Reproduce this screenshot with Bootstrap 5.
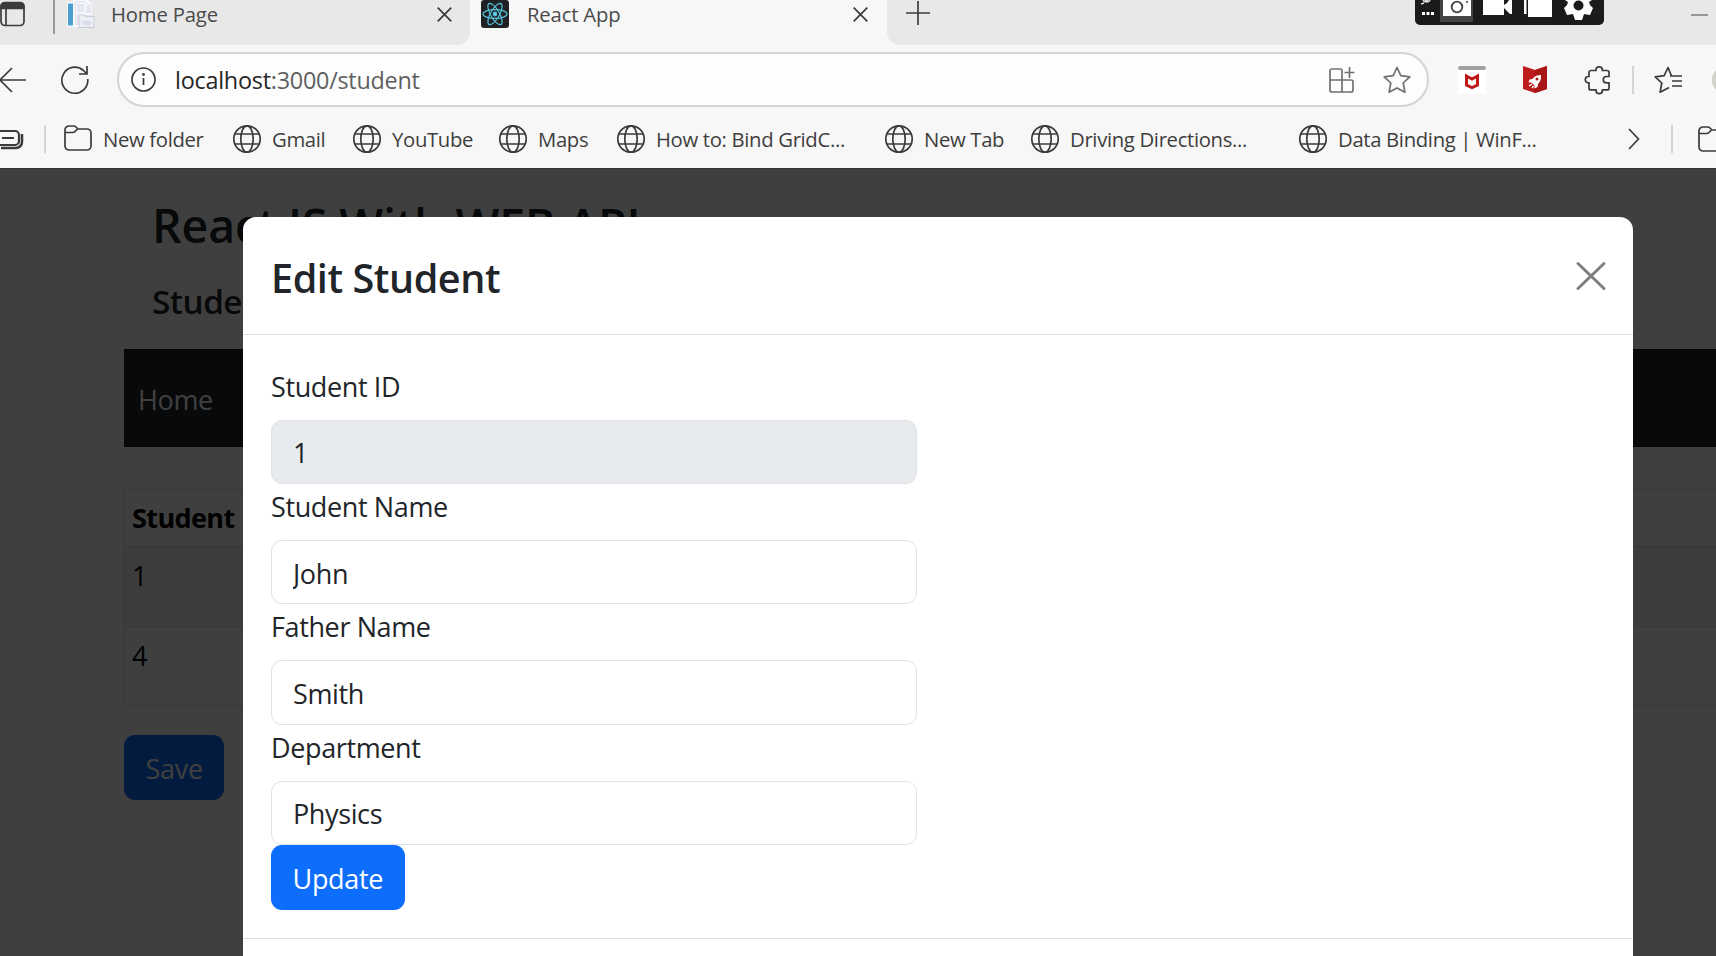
<!DOCTYPE html>
<html lang="en">
<head>
<meta charset="utf-8">
<meta name="viewport" content="width=device-width, initial-scale=1">
<title>React App</title>
<link href="https://cdn.jsdelivr.net/npm/bootstrap@5.3.0/dist/css/bootstrap.min.css" rel="stylesheet">
<style>
body{width:1716px;height:956px;overflow:hidden;background:#f7f7f7;font-family:"Open Sans","Noto Sans",sans-serif;font-size:27px;letter-spacing:-.38px;color:#212529}
svg{display:block;flex:none;fill:none;stroke:#3b3b3b;stroke-width:1.7;overflow:visible}
svg.flat{stroke:none}
/* tab strip */
.strip{height:45px}
.tabbox{height:45px;background:#e8e8e8;flex:none}
.tabbox>*{flex:none}
.tab-left{width:470px;border-bottom-right-radius:13px}
.tab-on{width:417px;background:#f7f7f7}
.tab-rest{border-bottom-left-radius:13px}
.tabtext{font-size:20.3px;line-height:28px;color:#4a4a4a;letter-spacing:-.17px;white-space:nowrap}
.tab-left .tabtext{width:326px;margin-left:16px}
.tab-on .tabtext{width:326px;margin-left:18px}
.tab-close{margin-top:7px}
.stripline{width:2px;height:34px;background:#999;margin:0 12px 0 28px}
.recorder{width:189px;height:25px;margin-left:497px}
/* toolbar */
.tools{height:69px}
.pill{width:1312px;height:55px;margin-left:27px;border:2px solid #d4d4d4;border-radius:28px;background:#fdfdfd;flex:none}
.url{font-size:23.4px;letter-spacing:-.25px;color:#5f5f5f;padding-top:2px}
.url b{font-weight:400;color:#272727}
.thinline{width:2px;height:28px;background:#d4d4d4;flex:none}
.grey-ico{stroke:#707070}
/* bookmarks */
.marks{height:54px;padding-bottom:4px;font-size:20.3px;letter-spacing:-.33px;color:#3e3e3e;white-space:nowrap}
.marks>*{flex:none}
.marks span{line-height:29px;margin-left:11px}
.w1{width:169px}.w2{width:120px}.w3{width:146px}.w4{width:118px}.w5{width:268px}.w6{width:329px}
/* page */
.viewport-pane{height:788px;background:#fff;overflow:hidden;padding:28px 0 0 124px;border-top:1px solid #ccc}
.viewport-pane h1{font-size:46.4px;line-height:56px;font-weight:600;margin:0 0 28px 28px;letter-spacing:-.1px}
.viewport-pane h2{font-size:33.3px;line-height:40px;font-weight:600;margin:0 0 28px 28px;letter-spacing:-.5px}
.sitebar{height:98px;background:#212529!important;padding:3px 14px 0;margin-bottom:42px}
.sitebar .nav-link{color:#fff;line-height:42px}
.students{width:1700px;border:1px solid #dee2e6;margin-bottom:29px;color:#000}
.students th,.students td{padding:7px 8px 7px 7px;line-height:42px;border-bottom:1px solid #dee2e6;background:none;box-shadow:none}
.students td{height:79.5px;vertical-align:top;padding-top:8px}
.students th{letter-spacing:-.6px}
.students .odd{background:#f2f2f2}
.btn-xl{font-size:27px;line-height:42px;height:65px;padding:2px 21.5px 0;border:0;border-radius:11px;letter-spacing:-.3px}
.shade{left:0;top:168px;width:1716px;height:788px;background:rgba(0,0,0,.753)}
/* dialog */
.dialog{left:243px;top:217px;width:1390px;height:739px;background:#fff;border-radius:13px 13px 0 0}
.dialog-head{height:118px;padding:1px 27px 0 28px;border-bottom:1px solid #dee2e6}
.dialog-head h3{font-size:39.6px;font-weight:600;letter-spacing:-.45px;line-height:50px;padding-top:3px}
.dialog-body{padding:28.500px 28px 0;border-bottom:1px solid #dee2e6;height:603.500px}
.field label{line-height:42px;height:56px;display:block;padding-top:2px}
.field .form-control{width:646px;height:64.4px;font-size:27px;line-height:40px;padding:2px 21px 0;border:1px solid #dfe3e7;border-radius:11px;letter-spacing:-.38px;color:#212529}
.field .form-control:disabled{background:#e7ebee}
</style>
<script src="https://cdn.jsdelivr.net/npm/bootstrap@5.3.0/dist/js/bootstrap.bundle.min.js"></script>
</head>
<body>
<svg width="0" height="0" class="position-absolute"><defs>
<symbol id="globe" viewBox="0 0 28 28"><circle cx="14" cy="14" r="13.2"/><ellipse cx="14" cy="14" rx="6.2" ry="13.2"/><path d="M1.8 9h24.4M1.8 19h24.4"/></symbol>
<symbol id="folder" viewBox="0 0 28 26"><path d="M1 5a4 4 0 0 1 4-4h4.5q1.500 0 2.500 1l2 2h9a4 4 0 0 1 4 4v13a4 4 0 0 1-4 4H5a4 4 0 0 1-4-4zM1 7.500h7.500q1.500 0 2.500-1l2.500-2.500"/></symbol>
<symbol id="cross" viewBox="0 0 15 15"><path d="M.7.7l13.600 13.600M14.300.7L.7 14.300"/></symbol>
</defs></svg>

<div class="strip d-flex">
  <div class="tabbox tab-left d-flex align-items-start">
    <svg width="25" height="27" viewBox="0 0 25 27"><rect x="1" y="3" width="23" height="22.500" rx="4"/><path d="M1 8.500V6.500a4 4 0 0 1 4-4h15a4 4 0 0 1 4 4v2z" fill="#3b3b3b"/><path d="M6 8v17"/></svg>
    <div class="stripline"></div>
    <svg class="flat" width="28" height="28" viewBox="0 0 28 28"><path d="M0 2h6V0h15l4 4v11h2v12H0z" fill="#fafafc"/><path d="M1 3.500h5v22H1z" fill="#4a9fd3"/><path d="M8 1.500h10l2 3h4l2 2v9H8z" fill="#f4f5fa" stroke="#d9dae2" stroke-width=".7"/><path d="M10 4h7v8h-7zM19 6h5v7h-5zM8 15h4v10H8z" fill="#e4e6f0"/><path d="M12 15h5l1 1.500h9v11H12z" fill="#eceef6" stroke="#c2c4cd" stroke-width=".8"/><ellipse cx="20" cy="23" rx="4.500" ry="2.500" fill="#d9dcea"/></svg>
    <div class="tabtext">Home Page</div>
    <svg class="tab-close" width="15" height="15"><use href="#cross"/></svg>
  </div>
  <div class="tabbox tab-on d-flex align-items-start">
    <svg width="39" height="28" viewBox="-11 0 39 28"><rect width="28" height="28" rx="3" fill="#202124" stroke="none"/><g stroke="#54bfd8" stroke-width="1.200"><ellipse cx="14" cy="14" rx="12" ry="4.400"/><ellipse cx="14" cy="14" rx="12" ry="4.400" transform="rotate(60 14 14)"/><ellipse cx="14" cy="14" rx="12" ry="4.400" transform="rotate(120 14 14)"/><circle cx="14" cy="14" r="1.800" fill="#61dafb"/></g></svg>
    <div class="tabtext">React App</div>
    <svg class="tab-close" width="15" height="15"><use href="#cross"/></svg>
  </div>
  <div class="tabbox tab-rest d-flex align-items-start flex-fill">
    <svg width="31" height="26" viewBox="-19 0 31 26"><path d="M0 13h24M12 1v24"/></svg>
    <svg class="recorder flat" viewBox="0 0 189 25"><path d="M0 0h189v20a5 5 0 0 1-5 5H5a5 5 0 0 1-5-5z" fill="#1b1b1b"/><path d="M7 12h3v3H7zM11.500 12h3v3h-3zM16 12h3v3h-3z" fill="#fff"/><path d="M6 4l3-1M8 0a4 4 0 0 0 7 0" stroke="#ddd" stroke-width="1.600"/><circle cx="11.500" cy="0" r="2" fill="#ddd"/><path d="M25 0h33v22H25z" fill="#444"/><path d="M28 0h28v16H28z" fill="#fff"/><circle cx="42" cy="7" r="5.300" stroke="#444" stroke-width="1.800"/><circle cx="52" cy="2" r="1" fill="#444"/><path d="M68 0h21v5l3-2 2-3h3v14h-2l-6-6v7H68zM113 0h24v17h-24zM109 0h2.500v14H109z" fill="#fff"/><path d="M150 0l3 2-1 3-3 3 3 7 6-1 2 6h7l2-6 6 1 3-7-3-3-1-3 3-2z" fill="#fff"/><circle cx="163.500" cy="5.500" r="5" fill="#1b1b1b"/></svg>
    <svg width="104" height="30" viewBox="-87 0 104 30"><path d="M0 15h17" stroke="#888"/></svg>
  </div>
</div>

<div class="tools d-flex align-items-center">
  <svg width="26" height="26" viewBox="0 0 26 26"><path d="M0 13h26M12 1L0 13l12 12"/></svg>
  <svg width="64" height="28" viewBox="-35 0 64 28"><path d="M26.800 13A13 13 0 1 1 22.500 4.500l3.500 3.500M26 0v8h-8" /></svg>
  <div class="pill d-flex align-items-center">
    <svg width="56" height="25" viewBox="-12 0 56 25"><circle cx="12.500" cy="12.500" r="11.500"/><path d="M12.500 11v7"/><circle cx="12.500" cy="7.500" r=".6"/></svg>
    <div class="url flex-fill"><b>localhost</b>:3000/student</div>
    <svg class="grey-ico" width="54" height="26" viewBox="0 0 54 26"><path d="M13 13V4a2 2 0 0 0-2-2H3a2 2 0 0 0-2 2v19a2 2 0 0 0 2 2h19a2 2 0 0 0 2-2v-8a2 2 0 0 0-2-2H1M13 13v12M20.500 0v11M15.500 5.500h10"/></svg>
    <svg class="grey-ico me-3" width="28" height="28" viewBox="0 0 28 28"><path d="M14 1.500l3.800 8.200 9 1.100-6.600 6.200 1.700 9.200-7.900-4.300-7.900 4.300 1.700-9.200L1.200 10.800l9-1.100z" stroke-linejoin="round"/></svg>
  </div>
  <svg class="flat" width="57" height="28" viewBox="-29 0 57 28"><path d="M0 0h28v28H0z" fill="#fff"/><rect width="28" height="4" rx="2" fill="#a3a0a0"/><path d="M8.500 10l5.500 3 5.500-3v9l-5.500 2.500L8.500 19z" stroke="#c01818" stroke-width="3"/></svg>
  <svg class="flat" width="61" height="27" viewBox="-37 0 61 27"><path d="M0 0l12 4 12-4v23l-12 4-12-4z" fill="#bd1a1c"/><path d="M12 4l12-4v23l-12 4z" fill="#a81616"/><path d="M18 9q-6 0-8.500 4l-3 .5-1 3 3 0 3 3 0 3 3-1.500 .5-3Q18.500 15 18 9z" fill="#fff"/><circle cx="14" cy="13" r="1.500" fill="#b01818"/><path d="M6 20l3-2M9 22l1.500-2" stroke="#fff" stroke-width="1.500"/></svg>
  <svg width="63" height="28" viewBox="-38 0 63 28"><path d="M6 4.500h5V4a3.200 3.200 0 0 1 6.400 0v.5H22a2 2 0 0 1 2 2v4h-2.500a3.200 3.200 0 0 0 0 6.400H24v5a2 2 0 0 1-2 2h-4.600v.5a3.200 3.200 0 0 1-6.400 0v-.5H6a2 2 0 0 1-2-2v-5h-.5a3.200 3.200 0 0 1 0-6.400H4v-4a2 2 0 0 1 2-2z"/></svg>
  <div class="thinline" style="margin-left:22px;margin-right:20px"></div>
  <svg width="28" height="28" viewBox="0 0 28 28"><path d="M16 10h1.500L14 1.500l-3.800 8.200-9 1.100 6.600 6.200-1.700 9.200 9-4.700M14 1.500l3.500 8.500M17 10h11M18 15h10M18 20h10" stroke-linejoin="round"/></svg>
  <div class="overflow-hidden ms-auto"><svg class="flat" width="4" height="28" viewBox="0 0 4 28"><circle cx="14" cy="14" r="14" fill="#d2d2cb"/></svg></div>
</div>

<div class="marks d-flex align-items-center">
  <svg width="24" height="20" viewBox="0 0 24 20"><path d="M0 2h15a4 4 0 0 1 4 4v6a4 4 0 0 1-4 4H0M2 9h12" stroke-width="2.200"/><path d="M22 5v8a6 6 0 0 1-6 6H1" stroke-width="2.500"/></svg>
  <div class="thinline" style="margin-left:20px;margin-right:18px"></div>
  <div class="w1 d-flex"><svg width="28" height="26"><use href="#folder"/></svg><span>New folder</span></div>
  <div class="w2 d-flex"><svg width="28" height="28"><use href="#globe"/></svg><span>Gmail</span></div>
  <div class="w3 d-flex"><svg width="28" height="28"><use href="#globe"/></svg><span>YouTube</span></div>
  <div class="w4 d-flex"><svg width="28" height="28"><use href="#globe"/></svg><span>Maps</span></div>
  <div class="w5 d-flex"><svg width="28" height="28"><use href="#globe"/></svg><span>How to: Bind GridC...</span></div>
  <div class="w3 d-flex"><svg width="28" height="28"><use href="#globe"/></svg><span>New Tab</span></div>
  <div class="w5 d-flex"><svg width="28" height="28"><use href="#globe"/></svg><span>Driving Directions...</span></div>
  <div class="w6 d-flex"><svg width="28" height="28"><use href="#globe"/></svg><span>Data Binding | WinF...</span></div>
  <svg width="11" height="20" viewBox="0 0 11 20"><path d="M1 0l9.500 10L1 20"/></svg>
  <div class="thinline" style="margin-left:32px;margin-right:25px"></div>
  <svg width="28" height="26"><use href="#folder"/></svg>
</div>

<main class="viewport-pane">
  <h1>React JS With WEB API</h1>
  <h2>Student</h2>
  <nav class="sitebar navbar"><a class="nav-link">Home</a></nav>
  <table class="students">
    <tr><th>Student</th></tr>
    <tr class="odd"><td>1</td></tr>
    <tr><td>4</td></tr>
  </table>
  <button class="btn btn-primary btn-xl">Save</button>
</main>
<div class="shade position-absolute"></div>

<section class="dialog position-absolute">
  <header class="dialog-head d-flex align-items-center justify-content-between">
    <h3 class="m-0">Edit Student</h3>
    <svg width="30" height="28" viewBox="0 0 30 28"><path d="M2 1.500l26 25M28 1.500l-26 25" style="stroke:#7f7f7f;stroke-width:3;stroke-linecap:round"/></svg>
  </header>
  <div class="dialog-body">
    <div class="field"><label for="f1">Student ID</label><input id="f1" class="form-control" value="1" disabled></div>
    <div class="field"><label for="f2">Student Name</label><input id="f2" class="form-control" value="John"></div>
    <div class="field"><label for="f3">Father Name</label><input id="f3" class="form-control" value="Smith"></div>
    <div class="field"><label for="f4">Department</label><input id="f4" class="form-control" value="Physics"></div>
    <button class="btn btn-primary btn-xl d-block">Update</button>
  </div>
</section>
</body>
</html>
